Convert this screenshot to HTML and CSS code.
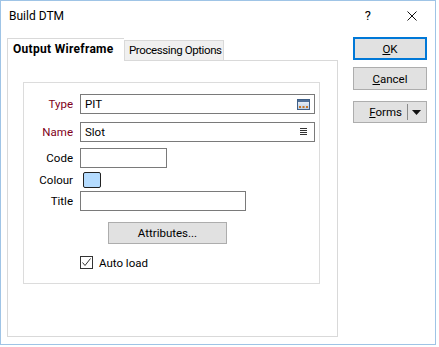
FILE: index.html
```html
<!DOCTYPE html>
<html lang="en">
<head>
  <meta charset="UTF-8" />
  <title>Build DTM</title>
  <link rel="stylesheet" href="styles.css">
</head>
<body>
  <div class="window">
    <div class="titlebar">
      <span class="title">Build DTM</span>
      <span class="help">?</span>
      <svg class="close" width="10" height="10" viewBox="0 0 10 10">
        <path d="M0.5 0.5 L9.5 9.5 M9.5 0.5 L0.5 9.5" stroke="#111" stroke-width="1" fill="none"/>
      </svg>
    </div>

    <div class="content">
      <div class="left">
        <div class="tabs">
          <div class="tab active">Output Wireframe</div>
          <div class="tab">Processing Options</div>
        </div>
        <div class="panel">
          <div class="group">
            <div class="row">
              <label class="req">Type</label>
              <div class="field wide">
                <span>PIT</span>
                <svg class="browse" width="13" height="11" viewBox="0 0 13 11">
                  <defs>
                    <linearGradient id="g" x1="0" y1="0" x2="0" y2="1">
                      <stop offset="0" stop-color="#f4f8fc"/>
                      <stop offset="1" stop-color="#b9cde4"/>
                    </linearGradient>
                  </defs>
                  <rect x="0.5" y="0.5" width="12" height="10" fill="url(#g)" stroke="#3f5f86"/>
                  <rect x="1" y="1" width="11" height="2" fill="#4e6f98"/>
                  <rect x="2" y="7" width="2" height="2" fill="#c8782a"/>
                  <rect x="5.5" y="7" width="2" height="2" fill="#c8782a"/>
                  <rect x="9" y="7" width="2" height="2" fill="#c8782a"/>
                </svg>
              </div>
            </div>
            <div class="row gap8">
              <label class="req">Name</label>
              <div class="field wide">
                <span>Slot</span>
                <svg class="list" width="7" height="8" viewBox="0 0 7 8">
                  <path d="M0 0.5 H7 M0 2.5 H7 M0 4.5 H7 M0 6.5 H7" stroke="#333" stroke-width="1"/>
                </svg>
              </div>
            </div>
            <div class="row gap6">
              <label>Code</label>
              <div class="field code"></div>
            </div>
            <div class="row gap4 short">
              <label>Colour</label>
              <div class="swatch"></div>
            </div>
            <div class="row gap3">
              <label>Title</label>
              <div class="field titlebox"></div>
            </div>
            <button class="btn attrs" type="button">Attributes...</button>
            <div class="check-row">
              <span class="checkbox">
                <svg width="11" height="11" viewBox="0 0 11 11">
                  <path d="M1.5 5.5 L4 8.5 L9.5 1.5" stroke="#333" stroke-width="1" fill="none"/>
                </svg>
              </span>
              <span>Auto load</span>
            </div>
          </div>
        </div>
      </div>

      <div class="right">
        <button class="btn side default" type="button"><u>O</u>K</button>
        <button class="btn side" type="button"><u>C</u>ancel</button>
        <div class="btn side forms">
          <span class="forms-label"><u>F</u>orms</span>
          <span class="divider"></span>
          <svg width="9" height="5" viewBox="0 0 9 5"><path d="M0 0 H9 L4.5 5 Z" fill="#111"/></svg>
        </div>
      </div>
    </div>
  </div>
</body>
</html>
```

FILE: styles.css
```css
body {
  margin: 0;
  background: white;
  font-family: Roboto, "Noto Sans", sans-serif;
  font-size: 11.5px;
  color: #000;
}
.window {
  width: 436px;
  height: 345px;
  box-sizing: border-box;
  border: 1px solid #9fc4e6;
  background: white;
}
.titlebar {
  height: 29px;
  display: flex;
  align-items: center;
}
.title {
  margin-left: 8px;
  font-size: 12px;
  flex: 1;
}
.help {
  font-size: 13px;
  margin-right: 36px;
}
.close {
  margin-right: 18px;
}
.content {
  display: flex;
  padding: 7px 0 0 6px;
}
.left {
  width: 331px;
}
.tabs {
  display: flex;
  align-items: flex-end;
  margin-top: 1px;
  height: 22px;
}
.tab {
  box-sizing: border-box;
  height: 20px;
  width: 100px;
  border: 1px solid #d9d9d9;
  border-bottom: none;
  background: #f0f0f0;
  padding-left: 4px;
  line-height: 19px;
  white-space: nowrap;
  letter-spacing: -0.4px;
}
.tab.active {
  width: 117px;
  height: 23px;
  margin-bottom: -1px;
  background: white;
  font-weight: bold;
  font-size: 12px;
  letter-spacing: 0.3px;
  padding-left: 5px;
  line-height: 21px;
  position: relative;
  z-index: 1;
  border-right: none;
}
.panel {
  box-sizing: border-box;
  height: 277px;
  border: 1px solid #d9d9d9;
  padding: 21px 0 0 15px;
}
.group {
  box-sizing: border-box;
  width: 297px;
  border: 1px solid #dcdcdc;
  padding: 11px 0 14px 0;
}
.row {
  display: flex;
  align-items: center;
  height: 20px;
}
.row.short {
  height: 16px;
}
.gap8 { margin-top: 8px; }
.gap6 { margin-top: 6px; }
.gap4 { margin-top: 4px; }
.gap3 { margin-top: 3px; }
label {
  width: 49px;
  text-align: right;
  margin-right: 7px;
}
label.req {
  color: #800020;
}
.field {
  box-sizing: border-box;
  height: 20px;
  border: 1px solid #7a7a7a;
  background: white;
  display: flex;
  align-items: center;
  padding: 0 4px 0 4px;
}
.field span {
  flex: 1;
}
.field.wide {
  width: 235px;
}
.field.code {
  width: 87px;
}
.field.titlebox {
  width: 166px;
}
.list {
  margin-right: 3px;
}
.swatch {
  box-sizing: border-box;
  width: 18px;
  height: 16px;
  margin-left: 3px;
  border: 1px solid #222;
  border-radius: 2px;
  background: #b5dcff;
}
.btn {
  box-sizing: border-box;
  background: #e1e1e1;
  border: 1px solid #adadad;
  font-family: inherit;
  font-size: 11.5px;
  color: #000;
  padding: 0;
}
.attrs {
  display: block;
  width: 119px;
  height: 22px;
  margin: 11px 0 0 84px;
}
.check-row {
  display: flex;
  align-items: center;
  height: 13px;
  margin: 12px 0 0 56px;
}
.checkbox {
  box-sizing: border-box;
  width: 13px;
  height: 13px;
  border: 1px solid #333;
  margin-right: 6px;
  display: flex;
}
.right {
  margin-left: 15px;
  display: flex;
  flex-direction: column;
}
.side {
  width: 74px;
  height: 23px;
  margin-bottom: 7px;
}
.side.default {
  border: 2px solid #0078d7;
}
.forms {
  margin-top: 4px;
  height: 22px;
  display: flex;
  align-items: center;
}
.forms-label {
  flex: 1;
  text-align: right;
  padding-right: 5px;
}
.divider {
  width: 1px;
  height: 16px;
  background: #8a8a8a;
  margin-right: 4px;
}
.forms svg {
  margin-right: 5px;
}
```
